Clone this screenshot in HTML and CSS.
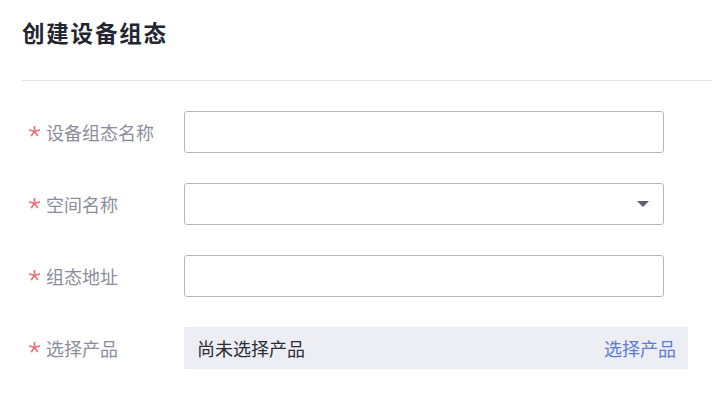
FILE: index.html
```html
<!DOCTYPE html>
<html lang="zh-CN">
<head>
<meta charset="utf-8">
<link rel="stylesheet" href="styles.css">
</head>
<body>
<div class="page">
  <header class="header">
    <h1 class="title">创建设备组态</h1>
  </header>
  <form class="form">
    <div class="row">
      <label class="label"><svg class="star" viewBox="0 0 10 10"><path d="M5 0.5V5M5 5L9.3 3.6M5 5L7.7 8.7M5 5L2.3 8.7M5 5L0.7 3.6"/></svg>设备组态名称</label>
      <div class="control"><input class="input" type="text"></div>
    </div>
    <div class="row">
      <label class="label"><svg class="star" viewBox="0 0 10 10"><path d="M5 0.5V5M5 5L9.3 3.6M5 5L7.7 8.7M5 5L2.3 8.7M5 5L0.7 3.6"/></svg>空间名称</label>
      <div class="control">
        <div class="select">
          <svg class="caret" viewBox="0 0 12 6"><path d="M0 0H12L6 6Z"/></svg>
        </div>
      </div>
    </div>
    <div class="row">
      <label class="label"><svg class="star" viewBox="0 0 10 10"><path d="M5 0.5V5M5 5L9.3 3.6M5 5L7.7 8.7M5 5L2.3 8.7M5 5L0.7 3.6"/></svg>组态地址</label>
      <div class="control"><input class="input" type="text"></div>
    </div>
    <div class="row">
      <label class="label"><svg class="star" viewBox="0 0 10 10"><path d="M5 0.5V5M5 5L9.3 3.6M5 5L7.7 8.7M5 5L2.3 8.7M5 5L0.7 3.6"/></svg>选择产品</label>
      <div class="product">
        <span class="product-empty">尚未选择产品</span>
        <a class="product-link">选择产品</a>
      </div>
    </div>
  </form>
</div>
</body>
</html>
```
FILE: styles.css
```css
* { box-sizing: border-box; }
html, body { margin: 0; padding: 0; background: #fff; }
body {
  font-family: "Noto Sans CJK SC", "Noto Sans", sans-serif;
}
.page {
  padding-left: 22px;
}
.header {
  height: 81px;
  padding-top: 16px;
  border-bottom: 1px solid #e3e4ea;
}
.title {
  margin: 0;
  font-size: 22.5px;
  line-height: 32px;
  font-weight: 700;
  color: #23262f;
  letter-spacing: 1.8px;
}
.form {
  display: flex;
  flex-direction: column;
  gap: 30px;
  padding-top: 30px;
}
.row {
  display: flex;
  align-items: center;
  height: 42px;
}
.label {
  width: 162px;
  flex: none;
  display: flex;
  align-items: center;
  font-size: 18px;
  line-height: 24px;
  color: #8b8e9a;
  padding-left: 7px;
  padding-bottom: 1px;
}
.star {
  width: 11px;
  height: 11px;
  margin-right: 6px;
  fill: none;
  stroke: #f26d6d;
  stroke-width: 1.5;
  stroke-linecap: round;
}
.control {
  width: 480px;
  height: 42px;
}
.input, .select {
  display: block;
  width: 100%;
  height: 42px;
  border: 1px solid #b4b5bf;
  border-radius: 3px;
  background: #fff;
  margin: 0;
  padding: 0 12px;
  outline: none;
}
.select {
  display: flex;
  align-items: center;
  justify-content: flex-end;
  padding-right: 14px;
}
.caret {
  width: 12px;
  height: 6px;
  fill: #5c5f6b;
}
.product {
  width: 504px;
  height: 42px;
  background: #edeef3;
  display: flex;
  align-items: center;
  justify-content: space-between;
  padding: 0 12px 0 13px;
  font-size: 18px;
  line-height: 24px;
}
.product-empty {
  color: #2a2d36;
}
.product-link {
  color: #5a7bd8;
  cursor: pointer;
}
```
